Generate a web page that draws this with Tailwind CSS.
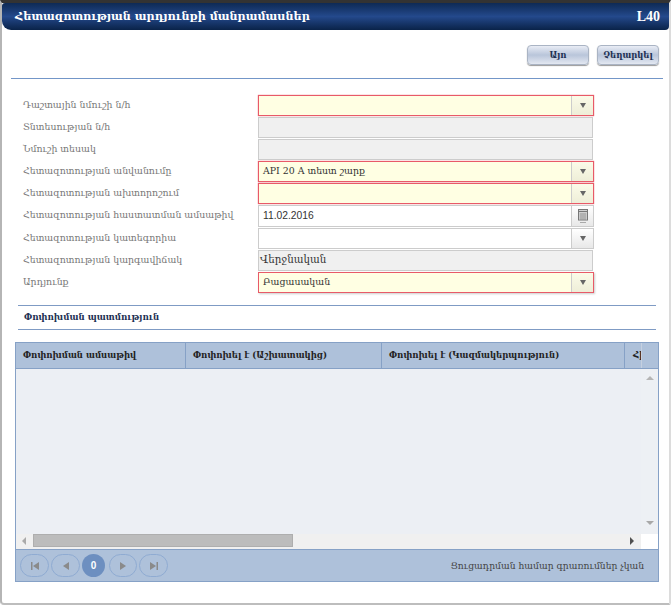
<!DOCTYPE html>
<html lang="hy">
  <head>
    <meta charset="UTF-8" />
    <title>Հետազոտության արդյունքի մանրամասներ</title>
    <script src="https://cdn.jsdelivr.net/npm/@tailwindcss/browser@4"></script>
  </head>
  <body class="bg-white">
    <div class="w-[671px] h-[606px] overflow-hidden font-['DejaVu_Serif','Liberation_Serif',serif] text-[#333]">
      <div class="h-[605px] border-l-2 border-r-2 border-b-2 border-l-[#b5b5b5] border-r-[#dcdcdc] border-b-[#bdbdbd] border-t-[3px] border-t-[#333] rounded-bl-[4px] rounded-br-[2px]">
        <!-- title -->
        <div class="h-[27px] flex items-center justify-between pl-[13px] pr-[9px] rounded-tl-[3px] rounded-bl-[9px] rounded-br-[4px] bg-gradient-to-b from-[#0e2a55] via-[#24498c] to-[#0a2349] text-white font-bold text-[11.2px]">
          <span>Հետազոտության արդյունքի մանրամասներ</span>
          <span class="font-['Liberation_Serif'] text-[14px]">L40</span>
        </div>

        <div class="flex justify-end gap-[8px] pt-[15px] pr-[10px]">
          <button class="w-[62px] h-[20px] rounded-[4px] border border-[#aab4c4] shadow-[0_1px_1px_#999] bg-gradient-to-b from-[#e9edf5] via-[#b9c5da] to-[#e3e8f1] text-[#1c2f52] font-bold text-[8.4px]">Այո</button>
          <button class="w-[62px] h-[20px] rounded-[4px] border border-[#aab4c4] shadow-[0_1px_1px_#999] bg-gradient-to-b from-[#e9edf5] via-[#b9c5da] to-[#e3e8f1] text-[#1c2f52] font-bold text-[8.4px]">Չեղարկել</button>
        </div>

        <div class="h-px bg-[#7396c8] ml-[9px] mr-[6px] mt-[13px]"></div>

        <!-- form -->
        <div class="pl-[21px] pt-[15px] flex flex-col text-[9.4px]">
          <div class="flex items-center h-[22px]">
            <label class="w-[235px] text-[#777]">Դաշտային նմուշի ն/հ</label>
            <div class="w-[336px] h-[21px] flex border border-[#e85a68] shadow-[0_0_1px_#e8606c] bg-[#ffffe3]">
              <span class="flex-1"></span>
              <span class="w-[22px] flex items-center justify-center border-l border-[#ccc] bg-gradient-to-b from-[#fbfbe8] to-[#eeeed8]"><span class="w-0 h-0 border-x-[3px] border-x-transparent border-t-[5px] border-t-[#666]"></span></span>
            </div>
          </div>
          <div class="flex items-center h-[22px]">
            <label class="w-[235px] text-[#777]">Տնտեսության ն/հ</label>
            <div class="w-[335px] h-[21px] border border-[#ccc] bg-[#f0f0f0]"></div>
          </div>
          <div class="flex items-center h-[22px]">
            <label class="w-[235px] text-[#777]">Նմուշի տեսակ</label>
            <div class="w-[335px] h-[21px] border border-[#ccc] bg-[#f0f0f0]"></div>
          </div>
          <div class="flex items-center h-[22px]">
            <label class="w-[235px] text-[#777]">Հետազոտության անվանումը</label>
            <div class="w-[336px] h-[21px] flex items-center border border-[#e85a68] shadow-[0_0_1px_#e8606c] bg-[#ffffe3]">
              <span class="flex-1 pl-[4px] text-[#333]">API 20 A տեստ շարք</span>
              <span class="w-[22px] h-full flex items-center justify-center border-l border-[#ccc] bg-gradient-to-b from-[#fbfbe8] to-[#eeeed8]"><span class="w-0 h-0 border-x-[3px] border-x-transparent border-t-[5px] border-t-[#666]"></span></span>
            </div>
          </div>
          <div class="flex items-center h-[22px]">
            <label class="w-[235px] text-[#777]">Հետազոտության ախտորոշում</label>
            <div class="w-[336px] h-[21px] flex border border-[#e85a68] shadow-[0_0_1px_#e8606c] bg-[#ffffe3]">
              <span class="flex-1"></span>
              <span class="w-[22px] flex items-center justify-center border-l border-[#ccc] bg-gradient-to-b from-[#fbfbe8] to-[#eeeed8]"><span class="w-0 h-0 border-x-[3px] border-x-transparent border-t-[5px] border-t-[#666]"></span></span>
            </div>
          </div>
          <div class="flex items-center h-[23px]">
            <label class="w-[235px] text-[#777]">Հետազոտության հաստատման ամսաթիվ</label>
            <div class="w-[336px] h-[22px] flex items-center border border-[#ccc] bg-white">
              <span class="flex-1 pl-[4px] text-[#333] font-['Liberation_Sans'] text-[10.3px]">11.02.2016</span>
              <span class="w-[22px] h-full flex items-center justify-center border-l border-[#ccc] bg-gradient-to-b from-white to-[#e8e8e8]">
                <svg width="12" height="16" viewBox="0 0 12 16" fill="none" stroke="#777">
                  <rect x="1.500" y="1.500" width="9" height="10.500" fill="#eee" stroke-width="1" />
                  <path d="M1.500 3.500h9" stroke-width="1.500" />
                  <path d="M2 6h8M2 8h8M2 10h8M4 5v7M6 5v7M8 5v7" stroke-width="0.600" />
                  <path d="M3 14.500h6" stroke="#aaa" />
                </svg>
              </span>
            </div>
          </div>
          <div class="flex items-center h-[22px]">
            <label class="w-[235px] text-[#777]">Հետազոտության կատեգորիա</label>
            <div class="w-[336px] h-[21px] flex border border-[#ccc] bg-white">
              <span class="flex-1"></span>
              <span class="w-[22px] flex items-center justify-center border-l border-[#ccc] bg-gradient-to-b from-white to-[#e8e8e8]"><span class="w-0 h-0 border-x-[3px] border-x-transparent border-t-[5px] border-t-[#666]"></span></span>
            </div>
          </div>
          <div class="flex items-center h-[22px]">
            <label class="w-[235px] text-[#777]">Հետազոտության կարգավիճակ</label>
            <div class="w-[335px] h-[21px] flex items-center border border-[#ccc] bg-[#f0f0f0] pl-[1px] text-[#333] text-[10.3px]">Վերջնական</div>
          </div>
          <div class="flex items-center h-[22px]">
            <label class="w-[235px] text-[#777]">Արդյունք</label>
            <div class="w-[336px] h-[21px] flex items-center border border-[#e85a68] bg-[#ffffe3] shadow-[1px_1px_2px_#ccc]">
              <span class="flex-1 pl-[4px] text-[#333]">Բացասական</span>
              <span class="w-[22px] h-full flex items-center justify-center border-l border-[#ccc] bg-gradient-to-b from-[#fbfbe8] to-[#eeeed8]"><span class="w-0 h-0 border-x-[3px] border-x-transparent border-t-[5px] border-t-[#666]"></span></span>
            </div>
          </div>
        </div>

        <!-- history -->
        <div class="ml-[16px] mr-[13px] mt-[12px] h-[25px] flex items-center pl-[6px] border-y border-[#7f9bc4] font-bold text-[8.6px] text-[#1c2f52]">Փոփոխման պատմություն</div>

        <div class="ml-[13px] mr-[10px] mt-[12px] h-[240px] border border-[#86a1c6] flex flex-col">
          <div class="h-[26px] flex bg-[#aec1da] border-b border-[#86a1c6] font-bold text-[8.5px] text-[#222] overflow-hidden">
            <div class="w-[170px] flex items-center pl-[7px] border-r border-[#86a1c6]">Փոփոխման ամսաթիվ</div>
            <div class="w-[196px] flex items-center pl-[7px] border-r border-[#86a1c6]">Փոփոխել է (Աշխատակից)</div>
            <div class="w-[243px] flex items-center pl-[7px] border-r border-[#86a1c6]">Փոփոխել է (Կազմակերպություն)</div>
            <div class="w-[17px] flex items-center pl-[8px] overflow-hidden whitespace-nowrap border-r border-[#c5d0e0]">Հիմք</div>
          </div>
          <div class="flex-1 flex bg-[#eceff4]">
            <div class="flex-1"></div>
            <div class="w-[17px] flex flex-col items-center justify-between pt-[7px] pb-[9px] bg-[#edf0f4]">
              <span class="w-0 h-0 border-x-[4px] border-x-transparent border-b-[4px] border-b-[#b5b5b5]"></span>
              <span class="w-0 h-0 border-x-[4px] border-x-transparent border-t-[4px] border-t-[#a8a8a8]"></span>
            </div>
          </div>
          <div class="h-[15px] flex">
            <div class="flex-1 flex items-start bg-[#f0f0f0]">
              <span class="ml-[6px] mt-[3px] w-0 h-0 border-y-[4px] border-y-transparent border-r-[4px] border-r-[#aaa]"></span>
              <div class="ml-[7px] w-[260px] h-[13px] bg-[#bcbcbc] border border-[#aeaeae]"></div>
              <span class="ml-auto mr-[7px] mt-[3px] w-0 h-0 border-y-[4px] border-y-transparent border-l-[4px] border-l-[#505050]"></span>
            </div>
            <div class="w-[17px] bg-white"></div>
          </div>
          <div class="h-[32px] flex items-center justify-between bg-[#aec1da] border-t border-[#86a1c6] pl-[4px] pr-[14px]">
            <div class="flex items-center gap-[2px]">
              <span class="w-[29px] h-[23px] rounded-full border border-[#8fabd2] flex items-center justify-center"><svg width="8" height="8" viewBox="0 0 8 8" fill="#8a8a8a"><path d="M0 0h1.500v8H0zM8 0v8L2 4z" /></svg></span>
              <span class="w-[29px] h-[23px] rounded-full border border-[#8fabd2] flex items-center justify-center"><svg width="6" height="8" viewBox="0 0 6 8" fill="#8a8a8a"><path d="M6 0v8L0 4z" /></svg></span>
              <span class="w-[23px] h-[23px] rounded-full bg-[#6d8fc0] flex items-center justify-center text-white font-bold font-['Liberation_Sans'] text-[10px]">0</span>
              <span class="ml-[2px] w-[28px] h-[23px] rounded-full border border-[#8fabd2] flex items-center justify-center"><svg width="6" height="8" viewBox="0 0 6 8" fill="#8a8a8a"><path d="M0 0v8l6-4z" /></svg></span>
              <span class="w-[29px] h-[23px] rounded-full border border-[#8fabd2] flex items-center justify-center"><svg width="8" height="8" viewBox="0 0 8 8" fill="#8a8a8a"><path d="M0 0v8l6-4zM6.500 0H8v8H6.500z" /></svg></span>
            </div>
            <span class="text-[9.2px] text-[#444]">Ցուցադրման համար գրառումներ չկան</span>
          </div>
        </div>
      </div>
    </div>
  </body>
</html>
